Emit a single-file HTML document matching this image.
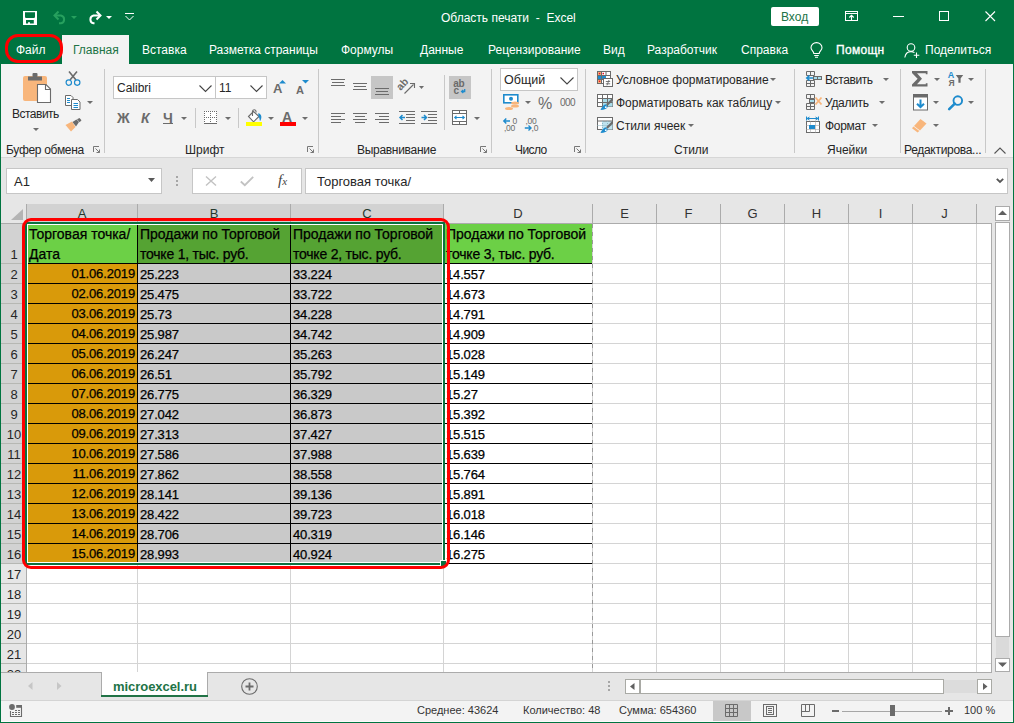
<!DOCTYPE html>
<html><head><meta charset="utf-8">
<style>
*{margin:0;padding:0;box-sizing:border-box}
html,body{width:1014px;height:723px;overflow:hidden;background:#007440;font-family:"Liberation Sans",sans-serif;position:relative}
.a{position:absolute}
svg.a{overflow:visible}
.t{position:absolute;white-space:nowrap;line-height:1}
.tab{position:absolute;top:44px;font-size:12px;color:#fff;white-space:nowrap;line-height:1}
.gl{position:absolute;top:144px;font-size:12px;color:#262626;white-space:nowrap;line-height:1}
.sep{position:absolute;width:1px;background:#c8c8c8}
.rt{position:absolute;font-size:12px;color:#262626;white-space:nowrap;line-height:1}
.c{position:absolute;font-size:14px;color:#000;white-space:nowrap;line-height:20px;-webkit-text-stroke:0.25px #000}
.n{font-size:13px;letter-spacing:-0.15px}
.st{position:absolute;top:705px;font-size:11px;color:#333;white-space:nowrap;line-height:1}
.dd{position:absolute;width:0;height:0;border-left:3px solid transparent;border-right:3px solid transparent;border-top:3px solid #6d6d6d}
</style></head><body>
<!-- ===== TITLE BAR ===== -->
<svg class="a" style="left:23px;top:11px" width="14" height="14"><path fill="#fff" fill-rule="evenodd" d="M0 0H14V14H0Z M2 1.2V6.2L2.8 7H11.2L12 6.2V1.2Z M3 9V12.6H5V11.2H7V12.6H10.8V9Z"/></svg>
<svg class="a" style="left:52px;top:10px" width="16" height="14"><path d="M3 5.5 H9 A4 4 0 0 1 9 13.3 H7" fill="none" stroke="#27a05e" stroke-width="2"/><path d="M6.5 1.5 L2.5 5.5 L6.5 9.5" fill="none" stroke="#27a05e" stroke-width="2"/></svg>
<svg class="a" style="left:71px;top:16px" width="6" height="3"><path d="M0 0H6L3 3Z" fill="#27a05e"/></svg>
<svg class="a" style="left:87px;top:10px" width="16" height="14"><path d="M12.5 5.5 H6.5 A4 4 0 0 0 6.5 13.3 H7.5" fill="none" stroke="#fff" stroke-width="2"/><path d="M9.5 1.5 L13.5 5.5 L9.5 9.5" fill="none" stroke="#fff" stroke-width="2"/></svg>
<svg class="a" style="left:106px;top:16px" width="6" height="3"><path d="M0 0H6L3 3Z" fill="#fff"/></svg>
<svg class="a" style="left:125px;top:13px" width="9" height="8"><path d="M0 0.5H9" stroke="#fff" stroke-width="1"/><path d="M0.5 3 L4.5 7 L8.5 3" fill="none" stroke="#fff" stroke-width="1"/></svg>
<div class="t" style="left:441px;top:12px;font-size:12px;color:#fff">Область печати&nbsp; - &nbsp;Excel</div>
<div class="a" style="left:771px;top:7px;width:48px;height:19px;background:#fff;border-radius:2px"></div>
<div class="t" style="left:781px;top:11px;font-size:12px;color:#217346">Вход</div>
<svg class="a" style="left:845px;top:11px" width="13" height="10"><rect x="0.5" y="0.5" width="12" height="9" fill="none" stroke="#fff"/><path d="M0.5 2.5H12.5" stroke="#fff"/><path d="M6.5 9V4.5 M4.3 6.5 L6.5 4.3 L8.7 6.5" fill="none" stroke="#fff" stroke-width="1.1"/></svg>
<div class="a" style="left:893px;top:16px;width:11px;height:1px;background:#fff"></div>
<div class="a" style="left:939px;top:11px;width:10px;height:10px;border:1px solid #fff"></div>
<svg class="a" style="left:985px;top:11px" width="11" height="11"><path d="M0.5 0.5L10 10M10 0.5L0.5 10" stroke="#fff" stroke-width="1.1"/></svg>

<!-- ===== TABS ===== -->
<div class="a" style="left:62px;top:35px;width:67px;height:30px;background:#f3f3f3"></div>
<div class="tab" style="left:16px">Файл</div>
<div class="tab" style="left:73px;color:#217346">Главная</div>
<div class="tab" style="left:142px">Вставка</div>
<div class="tab" style="left:209px">Разметка страницы</div>
<div class="tab" style="left:341px">Формулы</div>
<div class="tab" style="left:420px">Данные</div>
<div class="tab" style="left:488px">Рецензирование</div>
<div class="tab" style="left:603px">Вид</div>
<div class="tab" style="left:647px">Разработчик</div>
<div class="tab" style="left:741px">Справка</div>
<svg class="a" style="left:810px;top:43px" width="13" height="15"><path d="M3.8 10.5 C3.8 8.5 1 7.2 1 4.8 A5.5 5.2 0 0 1 12 4.8 C12 7.2 9.2 8.5 9.2 10.5 Z" fill="none" stroke="#fff" stroke-width="1.1"/><path d="M4.2 12.5H8.8M5 14.3H8" stroke="#fff" stroke-width="1.1"/></svg>
<div class="tab" style="left:836px;letter-spacing:0.3px;-webkit-text-stroke:0.35px #fff">Помощн</div>
<svg class="a" style="left:904px;top:43px" width="17" height="15"><circle cx="7" cy="4.5" r="3.8" fill="none" stroke="#fff" stroke-width="1.1"/><path d="M0.8 14.5 C1.5 10.5 4 8.6 7 8.6 C8.5 8.6 9.5 9 10.5 9.6" fill="none" stroke="#fff" stroke-width="1.1"/><path d="M12.5 9.5V15M9.8 12.3H15.3" stroke="#fff" stroke-width="1.1"/></svg>
<div class="tab" style="left:925px">Поделиться</div>
<!-- red oval around Файл -->
<div class="a" style="left:5px;top:34px;width:58px;height:29px;border:3px solid #ff0000;border-radius:13px"></div>

<!-- ===== RIBBON ===== -->
<div class="a" style="left:1px;top:64px;width:1012px;height:93px;background:#f3f3f3"></div>
<div class="a" style="left:1px;top:157px;width:1012px;height:1px;background:#d6d6d6"></div>
<div class="sep" style="left:104px;top:69px;height:84px"></div>
<div class="sep" style="left:318px;top:69px;height:84px"></div>
<div class="sep" style="left:491px;top:69px;height:84px"></div>
<div class="sep" style="left:585px;top:69px;height:84px"></div>
<div class="sep" style="left:794px;top:69px;height:84px"></div>
<div class="sep" style="left:900px;top:69px;height:84px"></div>
<div class="sep" style="left:985px;top:69px;height:84px"></div>
<!-- launchers -->
<svg class="a" style="left:93px;top:146px" width="7" height="7"><path d="M0.5 6V0.5H6" fill="none" stroke="#777"/><path d="M2.5 2.5L6.5 6.5M6.5 3.5V6.5H3.5" fill="none" stroke="#777"/></svg>
<svg class="a" style="left:307px;top:146px" width="7" height="7"><path d="M0.5 6V0.5H6" fill="none" stroke="#777"/><path d="M2.5 2.5L6.5 6.5M6.5 3.5V6.5H3.5" fill="none" stroke="#777"/></svg>
<svg class="a" style="left:480px;top:146px" width="7" height="7"><path d="M0.5 6V0.5H6" fill="none" stroke="#777"/><path d="M2.5 2.5L6.5 6.5M6.5 3.5V6.5H3.5" fill="none" stroke="#777"/></svg>
<svg class="a" style="left:574px;top:146px" width="7" height="7"><path d="M0.5 6V0.5H6" fill="none" stroke="#777"/><path d="M2.5 2.5L6.5 6.5M6.5 3.5V6.5H3.5" fill="none" stroke="#777"/></svg>
<svg class="a" style="left:994px;top:147px" width="12" height="7"><path d="M0.5 6.5L6 1L11.5 6.5" fill="none" stroke="#555" stroke-width="1.1"/></svg>
<!-- group labels -->
<div class="gl" style="left:6px;letter-spacing:-0.3px">Буфер обмена</div>
<div class="gl" style="left:185px">Шрифт</div>
<div class="gl" style="left:357px;letter-spacing:-0.3px">Выравнивание</div>
<div class="gl" style="left:515px;letter-spacing:-0.6px">Число</div>
<div class="gl" style="left:674px">Стили</div>
<div class="gl" style="left:827px">Ячейки</div>
<div class="gl" style="left:904px;letter-spacing:-0.3px">Редактирова...</div>

<!-- Clipboard -->
<svg class="a" style="left:22px;top:72px" width="30" height="32">
 <rect x="1" y="4" width="24" height="25" rx="2" fill="#f8b67c"/>
 <path d="M6 4.5H20V8.5H6Z" fill="#6b6b6b"/><rect x="10.5" y="1" width="5" height="4" rx="1" fill="#6b6b6b"/>
 <path d="M15.5 12.5H24L28.5 17V30.5H15.5Z" fill="#fff" stroke="#6b6b6b" stroke-width="1.1"/><path d="M23.5 12.5V17.5H28.5" fill="none" stroke="#6b6b6b" stroke-width="1.1"/>
</svg>
<div class="rt" style="left:12px;top:108px;letter-spacing:-0.5px">Вставить</div>
<div class="dd" style="left:33px;top:128px"></div>
<svg class="a" style="left:65px;top:71px" width="16" height="15"><path d="M4 0.5L11 9M12 0.5L5 9" stroke="#6b6b6b" stroke-width="1.6"/><circle cx="3.8" cy="11.6" r="2.7" fill="none" stroke="#1e8bcd" stroke-width="1.2"/><circle cx="12.2" cy="11.6" r="2.7" fill="none" stroke="#1e8bcd" stroke-width="1.2"/></svg>
<svg class="a" style="left:65px;top:95px" width="16" height="15"><path d="M0.5 0.5H6L8 2.5V10.5H0.5Z" fill="#fff" stroke="#6b6b6b"/><path d="M6.5 4.5H12.5L15 7V14.5H6.5Z" fill="#fff" stroke="#6b6b6b"/><path d="M2 3.5H5M2 5.5H5M2 7.5H5M8.5 8.5H13M8.5 10.5H13M8.5 12.5H13" stroke="#1e8bcd"/></svg>
<div class="dd" style="left:87px;top:101px"></div>
<svg class="a" style="left:65px;top:118px" width="17" height="14"><path d="M0.5 7 L7 3.5 L10.5 9 L6 13.5Z" fill="#f8b67c"/><path d="M7.5 4 L11.5 1.5 L14 4 L11 8.5Z" fill="#6b6b6b"/><path d="M12 1.2 L14.5 0 L16.5 2.2 L14.6 4.2Z" fill="#6b6b6b"/></svg>

<!-- Font -->
<div class="a" style="left:113px;top:76px;width:103px;height:23px;background:#fff;border:1px solid #c6c6c6"></div>
<div class="rt" style="left:117px;top:82px;color:#262626">Calibri</div>
<svg class="a" style="left:199px;top:85px" width="13" height="7"><path d="M0.5 0.5L6.5 6.5L12.5 0.5" fill="none" stroke="#444" stroke-width="1.1"/></svg>
<div class="a" style="left:215px;top:76px;width:52px;height:23px;background:#fff;border:1px solid #c6c6c6"></div>
<div class="rt" style="left:219px;top:82px;color:#262626">11</div>
<svg class="a" style="left:250px;top:85px" width="13" height="7"><path d="M0.5 0.5L6.5 6.5L12.5 0.5" fill="none" stroke="#444" stroke-width="1.1"/></svg>
<div class="t" style="left:273px;top:82px;font-size:13px;font-weight:bold;color:#6b6b6b">A</div>
<svg class="a" style="left:279px;top:80px" width="7" height="4"><path d="M0 3.5H7L3.5 0Z" fill="#1e8bcd"/></svg>
<div class="t" style="left:296px;top:85px;font-size:11px;font-weight:bold;color:#6b6b6b">A</div>
<svg class="a" style="left:302px;top:80px" width="7" height="4"><path d="M0 0H7L3.5 3.5Z" fill="#1e8bcd"/></svg>
<div class="t" style="left:117px;top:111px;font-size:14px;font-weight:bold;color:#6b6b6b">Ж</div>
<div class="t" style="left:141px;top:111px;font-size:14px;font-weight:bold;font-style:italic;color:#6b6b6b">К</div>
<div class="t" style="left:163px;top:111px;font-size:14px;font-weight:bold;color:#6b6b6b">Ч</div>
<div class="a" style="left:163px;top:123px;width:10px;height:1px;background:#6b6b6b"></div>
<div class="dd" style="left:181px;top:117px"></div>
<div class="sep" style="left:195px;top:108px;height:20px"></div>
<svg class="a" style="left:204px;top:110px" width="14" height="14"><rect x="0" y="1" width="13" height="12" fill="#fff"/><rect x="0" y="1" width="1" height="1" fill="#6b6b6b"/><rect x="2" y="1" width="1" height="1" fill="#6b6b6b"/><rect x="4" y="1" width="1" height="1" fill="#6b6b6b"/><rect x="6" y="1" width="1" height="1" fill="#6b6b6b"/><rect x="8" y="1" width="1" height="1" fill="#6b6b6b"/><rect x="10" y="1" width="1" height="1" fill="#6b6b6b"/><rect x="12" y="1" width="1" height="1" fill="#6b6b6b"/><rect x="0" y="7" width="1" height="1" fill="#6b6b6b"/><rect x="2" y="7" width="1" height="1" fill="#6b6b6b"/><rect x="4" y="7" width="1" height="1" fill="#6b6b6b"/><rect x="6" y="7" width="1" height="1" fill="#6b6b6b"/><rect x="8" y="7" width="1" height="1" fill="#6b6b6b"/><rect x="10" y="7" width="1" height="1" fill="#6b6b6b"/><rect x="12" y="7" width="1" height="1" fill="#6b6b6b"/><rect x="0" y="3" width="1" height="1" fill="#6b6b6b"/><rect x="6" y="3" width="1" height="1" fill="#6b6b6b"/><rect x="12" y="3" width="1" height="1" fill="#6b6b6b"/><rect x="0" y="5" width="1" height="1" fill="#6b6b6b"/><rect x="6" y="5" width="1" height="1" fill="#6b6b6b"/><rect x="12" y="5" width="1" height="1" fill="#6b6b6b"/><rect x="0" y="9" width="1" height="1" fill="#6b6b6b"/><rect x="6" y="9" width="1" height="1" fill="#6b6b6b"/><rect x="12" y="9" width="1" height="1" fill="#6b6b6b"/><rect x="0" y="11" width="1" height="1" fill="#6b6b6b"/><rect x="6" y="11" width="1" height="1" fill="#6b6b6b"/><rect x="12" y="11" width="1" height="1" fill="#6b6b6b"/><rect x="0" y="13" width="13" height="1" fill="#6b6b6b"/></svg>
<div class="dd" style="left:225px;top:117px"></div>
<div class="sep" style="left:238px;top:108px;height:20px"></div>
<svg class="a" style="left:247px;top:109px" width="17" height="14"><path d="M1.5 7.5 L6.5 2.5 L12 7.5 L6.5 12.8Z" fill="#fff" stroke="#6b6b6b" stroke-width="1.1"/><path d="M5.5 7V2.2 A1.8 1.8 0 0 1 9 2.2 V3.5" fill="none" stroke="#6b6b6b" stroke-width="1.1"/><path d="M11.2 4.2 C14.5 4.8 15.5 8.5 13 12.3 C12.5 10 12.3 8.5 11.5 7.3Z" fill="#1e8bcd"/></svg>
<div class="a" style="left:246px;top:122px;width:16px;height:4px;background:#ffff00"></div>
<div class="dd" style="left:268px;top:117px"></div>
<div class="t" style="left:282px;top:110px;font-size:14px;font-weight:bold;color:#6b6b6b">A</div>
<div class="a" style="left:280px;top:122px;width:16px;height:4px;background:#ff0000"></div>
<div class="dd" style="left:302px;top:117px"></div>

<!-- Alignment -->
<svg class="a" style="left:331px;top:79px" width="15" height="8"><path d="M0 0.5H14M1 3.5H13M0 6.5H14" stroke="#6b6b6b"/></svg>
<svg class="a" style="left:353px;top:83px" width="15" height="8"><path d="M0 0.5H14M1 3.5H13M0 6.5H14" stroke="#6b6b6b"/></svg>
<div class="a" style="left:371px;top:76px;width:22px;height:23px;background:#c6c6c6"></div>
<svg class="a" style="left:375px;top:88px" width="15" height="8"><path d="M0 0.5H14M1 3.5H13M0 6.5H14" stroke="#6b6b6b"/></svg>
<svg class="a" style="left:399px;top:79px" width="26" height="16"><text x="0" y="0" font-size="10.5" font-weight="bold" fill="#6b6b6b" font-family="Liberation Sans" transform="translate(1.8 12) rotate(-48)">ab</text><path d="M5.5 14.5 L14.5 5.5" stroke="#6b6b6b" stroke-width="1.1"/><path d="M11 4.5H15.5V9" fill="none" stroke="#6b6b6b" stroke-width="1.1"/><path d="M20 7H25L22.5 10Z" fill="#6d6d6d"/></svg>
<div class="sep" style="left:444px;top:75px;height:55px"></div>
<div class="a" style="left:449px;top:76px;width:22px;height:23px;background:#c6c6c6"></div>
<svg class="a" style="left:452px;top:78px" width="17" height="18"><text x="1.3" y="8.6" font-size="10" font-weight="bold" fill="#6b6b6b" font-family="Liberation Sans" letter-spacing="-0.4">ab</text><text x="1.5" y="15.8" font-size="10" font-weight="bold" fill="#6b6b6b" font-family="Liberation Sans">c</text><path d="M12.7 11V13.5H10 M11.3 12L9.6 13.5L11.3 15" fill="none" stroke="#1e8bcd" stroke-width="1.3"/></svg>
<svg class="a" style="left:331px;top:113px" width="15" height="11"><path d="M0 0.5H14M0 3.5H10M0 6.5H14M0 9.5H10" stroke="#6b6b6b"/></svg>
<svg class="a" style="left:353px;top:113px" width="15" height="11"><path d="M0 0.5H14M2 3.5H12M0 6.5H14M2 9.5H12" stroke="#6b6b6b"/></svg>
<svg class="a" style="left:375px;top:113px" width="15" height="11"><path d="M0 0.5H14M4 3.5H14M0 6.5H14M4 9.5H14" stroke="#6b6b6b"/></svg>
<svg class="a" style="left:399px;top:111px" width="17" height="13"><path d="M0 0.5H16M7 3.5H16M7 6.5H16M7 9.5H16M0 12.5H16" stroke="#6b6b6b"/><path d="M1 6.5H6M3.5 4L1 6.5L3.5 9" fill="none" stroke="#1e8bcd" stroke-width="1.5"/></svg>
<svg class="a" style="left:421px;top:111px" width="17" height="13"><path d="M0 0.5H16M7 3.5H16M7 6.5H16M7 9.5H16M0 12.5H16" stroke="#6b6b6b"/><path d="M0.5 6.5H5.5M3 4L5.5 6.5L3 9" fill="none" stroke="#1e8bcd" stroke-width="1.5"/></svg>
<svg class="a" style="left:452px;top:110px" width="16" height="15"><rect x="0.5" y="0.5" width="14" height="14" fill="#fff" stroke="#6b6b6b"/><path d="M0.5 3.5H14.5M0.5 11.5H14.5M7.5 0.5V3.5M7.5 11.5V14.5" stroke="#6b6b6b"/><path d="M2.5 7.5H12.5M4.5 5.8L2.7 7.5L4.5 9.2M10.5 5.8L12.3 7.5L10.5 9.2" fill="none" stroke="#1e8bcd" stroke-width="1.1"/></svg>
<div class="dd" style="left:474px;top:117px"></div>

<!-- Number -->
<div class="a" style="left:500px;top:68px;width:78px;height:23px;background:#fff;border:1px solid #c6c6c6"></div>
<div class="rt" style="left:504px;top:74px;font-size:12.5px">Общий</div>
<svg class="a" style="left:560px;top:77px" width="14" height="8"><path d="M0.5 0.5L7 7L13.5 0.5" fill="none" stroke="#444" stroke-width="1.1"/></svg>
<svg class="a" style="left:503px;top:94px" width="17" height="17"><rect x="0.8" y="0.8" width="14" height="8" fill="#fff" stroke="#1e8bcd" stroke-width="1.6"/><circle cx="8" cy="4.8" r="2" fill="#1e8bcd"/><ellipse cx="12" cy="9" rx="4" ry="1.6" fill="#f8b67c"/><ellipse cx="12" cy="12" rx="4" ry="1.6" fill="#f8b67c"/><ellipse cx="6" cy="14.5" rx="4" ry="1.6" fill="#f8b67c"/></svg>
<div class="dd" style="left:525px;top:101px"></div>
<div class="t" style="left:538px;top:96px;font-size:16px;color:#6b6b6b">%</div>
<div class="t" style="left:560px;top:98px;font-size:10px;color:#6b6b6b;letter-spacing:-0.6px">000</div>
<svg class="a" style="left:503px;top:117px" width="16" height="17"><path d="M0.8 4H7M3.3 1.5L0.8 4L3.3 6.5" fill="none" stroke="#1e8bcd" stroke-width="1.4"/><text x="9.5" y="6.8" font-size="8.5" fill="#6b6b6b" font-family="Liberation Sans">0</text><text x="1" y="14" font-size="8.5" fill="#6b6b6b" font-family="Liberation Sans" letter-spacing="-0.3">,00</text></svg>
<svg class="a" style="left:524px;top:117px" width="16" height="17"><text x="1.5" y="6.8" font-size="8.5" fill="#6b6b6b" font-family="Liberation Sans" letter-spacing="-0.3">,00</text><path d="M0.8 11H7M4.5 8.5L7 11L4.5 13.5" fill="none" stroke="#1e8bcd" stroke-width="1.4"/><text x="7.5" y="14" font-size="8.5" fill="#6b6b6b" font-family="Liberation Sans">,0</text></svg>

<!-- Styles -->
<svg class="a" style="left:597px;top:71px" width="17" height="17"><rect x="0.5" y="0.5" width="13" height="12" fill="#fff" stroke="#6b6b6b"/><rect x="1" y="1" width="3.5" height="3.5" fill="#f8b67c"/><rect x="1" y="8.5" width="3.5" height="3.5" fill="#f8b67c"/><rect x="1" y="4.5" width="8" height="4" fill="#1e8bcd"/><rect x="1.8" y="1.8" width="1.5" height="1.5" fill="#e81123"/><rect x="5.5" y="1.8" width="1.5" height="1.5" fill="#e81123"/><rect x="1.8" y="9.5" width="1.5" height="1.5" fill="#e81123"/><path d="M4.5 0.5V12.5M9 0.5V4.5M0.5 4.5H13.5M0.5 8.5H6" stroke="#6b6b6b"/><rect x="6.5" y="7.5" width="9" height="8" fill="#fff" stroke="#6b6b6b"/><path d="M8.8 10.5H13.2M8.8 12.8H13.2M12 9L10 14.3" stroke="#6b6b6b" stroke-width="0.9"/></svg>
<div class="rt" style="left:616px;top:74px">Условное форматирование</div>
<div class="dd" style="left:770px;top:78px"></div>
<svg class="a" style="left:597px;top:94px" width="17" height="17"><rect x="0.5" y="0.5" width="15" height="12" fill="#fff" stroke="#6b6b6b"/><rect x="5.5" y="4.5" width="10" height="8" fill="#a9dcea"/><path d="M5.5 0.5V12.5M10.5 0.5V12.5M0.5 4.5H15.5M0.5 8.5H15.5" stroke="#6b6b6b"/><path d="M16 3.2 L9 10.2 L10.6 11.8 L16 6.4Z" fill="#6b6b6b"/><path d="M3.5 16 C4.5 13.5 6.5 11 8.5 10.3 L10.8 12.6 C10.3 14.8 7.5 16 3.5 16Z" fill="#1e8bcd"/><circle cx="8.8" cy="13.2" r="0.9" fill="#fff"/></svg>
<div class="rt" style="left:616px;top:97px">Форматировать как таблицу</div>
<div class="dd" style="left:775px;top:101px"></div>
<svg class="a" style="left:597px;top:117px" width="17" height="17"><rect x="0.5" y="0.5" width="15" height="12" fill="#fff" stroke="#6b6b6b"/><rect x="5" y="4" width="10.5" height="8.5" fill="#bfe3ef"/><path d="M0.5 4H15.5" stroke="#6b6b6b"/><path d="M5.5 4V12.5M10.5 4V12.5M0.5 8.5H15.5" stroke="#8fb8c4" stroke-dasharray="1 1"/><path d="M16 3.2 L9 10.2 L10.6 11.8 L16 6.4Z" fill="#6b6b6b"/><path d="M3.5 16 C4.5 13.5 6.5 11 8.5 10.3 L10.8 12.6 C10.3 14.8 7.5 16 3.5 16Z" fill="#1e8bcd"/><circle cx="8.8" cy="13.2" r="0.9" fill="#fff"/></svg>
<div class="rt" style="left:616px;top:120px">Стили ячеек</div>
<div class="dd" style="left:688px;top:124px"></div>

<!-- Cells -->
<svg class="a" style="left:805px;top:70px" width="18" height="18"><path d="M1.5 1.5H9.5V5.5H1.5Z M5.5 1.5V5.5 M1.5 10.5H9.5V16.5H1.5Z M1.5 13.5H9.5 M5.5 10.5V16.5" fill="none" stroke="#6b6b6b"/><rect x="8.5" y="6.5" width="8" height="3" fill="#a9dcea" stroke="#6b6b6b"/><path d="M12.5 6.5V9.5" stroke="#6b6b6b"/><path d="M1.8 8H8 M4.5 5.5L1.8 8L4.5 10.5" fill="none" stroke="#1e8bcd" stroke-width="1.6"/></svg>
<div class="rt" style="left:825px;top:74px;letter-spacing:-0.4px">Вставить</div>
<div class="dd" style="left:883px;top:78px"></div>
<svg class="a" style="left:805px;top:93px" width="18" height="18"><path d="M1.5 1.5H9.5V5.5H1.5Z M5.5 1.5V5.5 M1.5 10.5H9.5V16.5H1.5Z M1.5 13.5H9.5 M5.5 10.5V16.5" fill="none" stroke="#6b6b6b"/><rect x="4.5" y="6.5" width="5" height="3" fill="#a9dcea" stroke="#6b6b6b"/><path d="M10.5 4.5L16.5 11.5M16.5 4.5L10.5 11.5" stroke="#f8b67c" stroke-width="1.8"/></svg>
<div class="rt" style="left:825px;top:97px;letter-spacing:-0.3px">Удалить</div>
<div class="dd" style="left:879px;top:101px"></div>
<svg class="a" style="left:805px;top:116px" width="17" height="18"><path d="M1.5 2.5H13.5M1.5 0.5V4.5M13.5 0.5V4.5" fill="none" stroke="#1e8bcd"/><path d="M4.5 1L2 2.5L4.5 4M10.5 1L13 2.5L10.5 4" fill="none" stroke="#1e8bcd"/><rect x="1.5" y="5.5" width="13" height="11" fill="#fff" stroke="#6b6b6b"/><path d="M5.5 5.5V16.5M10.5 5.5V16.5M1.5 9.5H14.5M1.5 13.5H14.5" stroke="#9a9a9a" stroke-dasharray="1 1"/><rect x="4" y="9" width="6" height="4" fill="#1e8bcd"/></svg>
<div class="rt" style="left:825px;top:120px;letter-spacing:-0.3px">Формат</div>
<div class="dd" style="left:872px;top:124px"></div>

<!-- Editing -->
<svg class="a" style="left:912px;top:71px" width="16" height="16"><path d="M0 0H15.5V3.2H13.8V2.2H5L10 7.8L5 13.3H13.8V12.3H15.5V15.5H0V13.6L5.6 7.8L0 2Z" fill="#6b6b6b"/></svg>
<div class="dd" style="left:934px;top:78px"></div>
<svg class="a" style="left:947px;top:70px" width="18" height="17"><text x="0.8" y="7.5" font-size="9" font-weight="bold" fill="#1e8bcd" font-family="Liberation Sans">A</text><text x="1.5" y="16" font-size="8.5" font-weight="bold" fill="#6b6b6b" font-family="Liberation Sans">Я</text><path d="M8.8 5H16.2L13.6 8.6V12.8H11.4V8.6Z" fill="#6b6b6b"/></svg>
<div class="dd" style="left:968px;top:78px"></div>
<svg class="a" style="left:913px;top:94px" width="15" height="17"><rect x="0.5" y="0.5" width="14" height="15.5" fill="#fff" stroke="#6b6b6b"/><rect x="0.5" y="0.5" width="14" height="3" fill="#6b6b6b"/><path d="M7.5 5.5V13.2M4 9.8L7.5 13.2L11 9.8" fill="none" stroke="#1e8bcd" stroke-width="2"/></svg>
<div class="dd" style="left:933px;top:101px"></div>
<svg class="a" style="left:948px;top:95px" width="16" height="16"><circle cx="9.8" cy="5.6" r="4.3" fill="none" stroke="#1e8bcd" stroke-width="1.9"/><path d="M6.8 8.6L1.2 14.2" stroke="#1e8bcd" stroke-width="2.6" stroke-linecap="round"/></svg>
<div class="dd" style="left:968px;top:101px"></div>
<svg class="a" style="left:912px;top:118px" width="16" height="15"><path d="M8.5 1L14.5 5.5L8 12.5L2 8Z" fill="#f8b67c"/><path d="M1.5 8.6L7.4 13L5.6 14.6L0 10.3Z" fill="#f8b67c"/></svg>
<div class="dd" style="left:933px;top:124px"></div>

<!-- ===== FORMULA BAR ===== -->
<div class="a" style="left:1px;top:158px;width:1012px;height:46px;background:#e6e6e6"></div>
<div class="a" style="left:6px;top:168px;width:156px;height:26px;background:#fff;border:1px solid #c6c6c6"></div>
<div class="t" style="left:14px;top:175px;font-size:13px;color:#262626">A1</div>
<svg class="a" style="left:148px;top:178px" width="7" height="4"><path d="M0 0H7L3.5 4Z" fill="#595959"/></svg>
<div class="a" style="left:176px;top:176px;width:2px;height:2px;background:#a6a6a6"></div>
<div class="a" style="left:176px;top:180px;width:2px;height:2px;background:#a6a6a6"></div>
<div class="a" style="left:176px;top:184px;width:2px;height:2px;background:#a6a6a6"></div>
<div class="a" style="left:192px;top:168px;width:110px;height:26px;background:#fff;border:1px solid #c6c6c6"></div>
<svg class="a" style="left:205px;top:176px" width="12" height="10"><path d="M1 0.5L11 9.5M11 0.5L1 9.5" stroke="#c2c2c2" stroke-width="1.4"/></svg>
<svg class="a" style="left:240px;top:176px" width="14" height="10"><path d="M0.8 5.5L4.8 9.2L13.2 0.8" fill="none" stroke="#c2c2c2" stroke-width="1.8"/></svg>
<div class="t" style="left:278px;top:173px;font-size:15px;font-style:italic;font-family:'Liberation Serif',serif;color:#444">f<span style="font-size:11px">x</span></div>
<div class="a" style="left:305px;top:168px;width:703px;height:26px;background:#fff;border:1px solid #c6c6c6"></div>
<div class="t" style="left:317px;top:175px;font-size:13px;color:#262626">Торговая точка/</div>
<svg class="a" style="left:996px;top:178px" width="8" height="5"><path d="M0.8 0.8L4 4L7.2 0.8" fill="none" stroke="#555" stroke-width="1.8"/></svg>

<div class="a" style="left:1px;top:224px;width:990px;height:448px;background:#fff"></div>
<div class="a" style="left:27px;top:263px;width:964px;height:1px;background:#d4d4d4"></div>
<div class="a" style="left:27px;top:283px;width:964px;height:1px;background:#d4d4d4"></div>
<div class="a" style="left:27px;top:303px;width:964px;height:1px;background:#d4d4d4"></div>
<div class="a" style="left:27px;top:323px;width:964px;height:1px;background:#d4d4d4"></div>
<div class="a" style="left:27px;top:343px;width:964px;height:1px;background:#d4d4d4"></div>
<div class="a" style="left:27px;top:363px;width:964px;height:1px;background:#d4d4d4"></div>
<div class="a" style="left:27px;top:383px;width:964px;height:1px;background:#d4d4d4"></div>
<div class="a" style="left:27px;top:403px;width:964px;height:1px;background:#d4d4d4"></div>
<div class="a" style="left:27px;top:423px;width:964px;height:1px;background:#d4d4d4"></div>
<div class="a" style="left:27px;top:443px;width:964px;height:1px;background:#d4d4d4"></div>
<div class="a" style="left:27px;top:463px;width:964px;height:1px;background:#d4d4d4"></div>
<div class="a" style="left:27px;top:483px;width:964px;height:1px;background:#d4d4d4"></div>
<div class="a" style="left:27px;top:503px;width:964px;height:1px;background:#d4d4d4"></div>
<div class="a" style="left:27px;top:523px;width:964px;height:1px;background:#d4d4d4"></div>
<div class="a" style="left:27px;top:543px;width:964px;height:1px;background:#d4d4d4"></div>
<div class="a" style="left:27px;top:563px;width:964px;height:1px;background:#d4d4d4"></div>
<div class="a" style="left:27px;top:583px;width:964px;height:1px;background:#d4d4d4"></div>
<div class="a" style="left:27px;top:603px;width:964px;height:1px;background:#d4d4d4"></div>
<div class="a" style="left:27px;top:623px;width:964px;height:1px;background:#d4d4d4"></div>
<div class="a" style="left:27px;top:643px;width:964px;height:1px;background:#d4d4d4"></div>
<div class="a" style="left:27px;top:663px;width:964px;height:1px;background:#d4d4d4"></div>
<div class="a" style="left:137px;top:224px;width:1px;height:448px;background:#d4d4d4"></div>
<div class="a" style="left:290px;top:224px;width:1px;height:448px;background:#d4d4d4"></div>
<div class="a" style="left:443px;top:224px;width:1px;height:448px;background:#d4d4d4"></div>
<div class="a" style="left:592px;top:224px;width:1px;height:448px;background:#d4d4d4"></div>
<div class="a" style="left:656px;top:224px;width:1px;height:448px;background:#d4d4d4"></div>
<div class="a" style="left:720px;top:224px;width:1px;height:448px;background:#d4d4d4"></div>
<div class="a" style="left:784px;top:224px;width:1px;height:448px;background:#d4d4d4"></div>
<div class="a" style="left:848px;top:224px;width:1px;height:448px;background:#d4d4d4"></div>
<div class="a" style="left:912px;top:224px;width:1px;height:448px;background:#d4d4d4"></div>
<div class="a" style="left:976px;top:224px;width:1px;height:448px;background:#d4d4d4"></div>
<div class="a" style="left:27px;top:224px;width:110px;height:39px;background:#6cd046"></div>
<div class="a" style="left:138px;top:224px;width:152px;height:39px;background:#55a333"></div>
<div class="a" style="left:291px;top:224px;width:152px;height:39px;background:#55a333"></div>
<div class="a" style="left:444px;top:224px;width:148px;height:39px;background:#6cd046"></div>
<div class="a" style="left:27px;top:264px;width:110px;height:19px;background:#d99a0a"></div>
<div class="a" style="left:138px;top:264px;width:152px;height:19px;background:#c9c9c9"></div>
<div class="a" style="left:291px;top:264px;width:152px;height:19px;background:#c9c9c9"></div>
<div class="a" style="left:27px;top:284px;width:110px;height:19px;background:#d99a0a"></div>
<div class="a" style="left:138px;top:284px;width:152px;height:19px;background:#c9c9c9"></div>
<div class="a" style="left:291px;top:284px;width:152px;height:19px;background:#c9c9c9"></div>
<div class="a" style="left:27px;top:304px;width:110px;height:19px;background:#d99a0a"></div>
<div class="a" style="left:138px;top:304px;width:152px;height:19px;background:#c9c9c9"></div>
<div class="a" style="left:291px;top:304px;width:152px;height:19px;background:#c9c9c9"></div>
<div class="a" style="left:27px;top:324px;width:110px;height:19px;background:#d99a0a"></div>
<div class="a" style="left:138px;top:324px;width:152px;height:19px;background:#c9c9c9"></div>
<div class="a" style="left:291px;top:324px;width:152px;height:19px;background:#c9c9c9"></div>
<div class="a" style="left:27px;top:344px;width:110px;height:19px;background:#d99a0a"></div>
<div class="a" style="left:138px;top:344px;width:152px;height:19px;background:#c9c9c9"></div>
<div class="a" style="left:291px;top:344px;width:152px;height:19px;background:#c9c9c9"></div>
<div class="a" style="left:27px;top:364px;width:110px;height:19px;background:#d99a0a"></div>
<div class="a" style="left:138px;top:364px;width:152px;height:19px;background:#c9c9c9"></div>
<div class="a" style="left:291px;top:364px;width:152px;height:19px;background:#c9c9c9"></div>
<div class="a" style="left:27px;top:384px;width:110px;height:19px;background:#d99a0a"></div>
<div class="a" style="left:138px;top:384px;width:152px;height:19px;background:#c9c9c9"></div>
<div class="a" style="left:291px;top:384px;width:152px;height:19px;background:#c9c9c9"></div>
<div class="a" style="left:27px;top:404px;width:110px;height:19px;background:#d99a0a"></div>
<div class="a" style="left:138px;top:404px;width:152px;height:19px;background:#c9c9c9"></div>
<div class="a" style="left:291px;top:404px;width:152px;height:19px;background:#c9c9c9"></div>
<div class="a" style="left:27px;top:424px;width:110px;height:19px;background:#d99a0a"></div>
<div class="a" style="left:138px;top:424px;width:152px;height:19px;background:#c9c9c9"></div>
<div class="a" style="left:291px;top:424px;width:152px;height:19px;background:#c9c9c9"></div>
<div class="a" style="left:27px;top:444px;width:110px;height:19px;background:#d99a0a"></div>
<div class="a" style="left:138px;top:444px;width:152px;height:19px;background:#c9c9c9"></div>
<div class="a" style="left:291px;top:444px;width:152px;height:19px;background:#c9c9c9"></div>
<div class="a" style="left:27px;top:464px;width:110px;height:19px;background:#d99a0a"></div>
<div class="a" style="left:138px;top:464px;width:152px;height:19px;background:#c9c9c9"></div>
<div class="a" style="left:291px;top:464px;width:152px;height:19px;background:#c9c9c9"></div>
<div class="a" style="left:27px;top:484px;width:110px;height:19px;background:#d99a0a"></div>
<div class="a" style="left:138px;top:484px;width:152px;height:19px;background:#c9c9c9"></div>
<div class="a" style="left:291px;top:484px;width:152px;height:19px;background:#c9c9c9"></div>
<div class="a" style="left:27px;top:504px;width:110px;height:19px;background:#d99a0a"></div>
<div class="a" style="left:138px;top:504px;width:152px;height:19px;background:#c9c9c9"></div>
<div class="a" style="left:291px;top:504px;width:152px;height:19px;background:#c9c9c9"></div>
<div class="a" style="left:27px;top:524px;width:110px;height:19px;background:#d99a0a"></div>
<div class="a" style="left:138px;top:524px;width:152px;height:19px;background:#c9c9c9"></div>
<div class="a" style="left:291px;top:524px;width:152px;height:19px;background:#c9c9c9"></div>
<div class="a" style="left:27px;top:544px;width:110px;height:19px;background:#d99a0a"></div>
<div class="a" style="left:138px;top:544px;width:152px;height:19px;background:#c9c9c9"></div>
<div class="a" style="left:291px;top:544px;width:152px;height:19px;background:#c9c9c9"></div>
<div class="a" style="left:27px;top:263px;width:416px;height:1px;background:#000"></div>
<div class="a" style="left:443px;top:263px;width:149px;height:1px;background:#000"></div>
<div class="a" style="left:27px;top:283px;width:416px;height:1px;background:#000"></div>
<div class="a" style="left:443px;top:283px;width:149px;height:1px;background:#000"></div>
<div class="a" style="left:27px;top:303px;width:416px;height:1px;background:#000"></div>
<div class="a" style="left:443px;top:303px;width:149px;height:1px;background:#000"></div>
<div class="a" style="left:27px;top:323px;width:416px;height:1px;background:#000"></div>
<div class="a" style="left:443px;top:323px;width:149px;height:1px;background:#000"></div>
<div class="a" style="left:27px;top:343px;width:416px;height:1px;background:#000"></div>
<div class="a" style="left:443px;top:343px;width:149px;height:1px;background:#000"></div>
<div class="a" style="left:27px;top:363px;width:416px;height:1px;background:#000"></div>
<div class="a" style="left:443px;top:363px;width:149px;height:1px;background:#000"></div>
<div class="a" style="left:27px;top:383px;width:416px;height:1px;background:#000"></div>
<div class="a" style="left:443px;top:383px;width:149px;height:1px;background:#000"></div>
<div class="a" style="left:27px;top:403px;width:416px;height:1px;background:#000"></div>
<div class="a" style="left:443px;top:403px;width:149px;height:1px;background:#000"></div>
<div class="a" style="left:27px;top:423px;width:416px;height:1px;background:#000"></div>
<div class="a" style="left:443px;top:423px;width:149px;height:1px;background:#000"></div>
<div class="a" style="left:27px;top:443px;width:416px;height:1px;background:#000"></div>
<div class="a" style="left:443px;top:443px;width:149px;height:1px;background:#000"></div>
<div class="a" style="left:27px;top:463px;width:416px;height:1px;background:#000"></div>
<div class="a" style="left:443px;top:463px;width:149px;height:1px;background:#000"></div>
<div class="a" style="left:27px;top:483px;width:416px;height:1px;background:#000"></div>
<div class="a" style="left:443px;top:483px;width:149px;height:1px;background:#000"></div>
<div class="a" style="left:27px;top:503px;width:416px;height:1px;background:#000"></div>
<div class="a" style="left:443px;top:503px;width:149px;height:1px;background:#000"></div>
<div class="a" style="left:27px;top:523px;width:416px;height:1px;background:#000"></div>
<div class="a" style="left:443px;top:523px;width:149px;height:1px;background:#000"></div>
<div class="a" style="left:27px;top:543px;width:416px;height:1px;background:#000"></div>
<div class="a" style="left:443px;top:543px;width:149px;height:1px;background:#000"></div>
<div class="a" style="left:27px;top:563px;width:416px;height:1px;background:#000"></div>
<div class="a" style="left:443px;top:563px;width:149px;height:1px;background:#000"></div>
<div class="a" style="left:137px;top:224px;width:1px;height:340px;background:#000"></div>
<div class="a" style="left:290px;top:224px;width:1px;height:340px;background:#000"></div>
<div class="a" style="left:592px;top:224px;width:1px;height:448px;background:repeating-linear-gradient(#999 0 4px,transparent 4px 8px)"></div>
<div class="a" style="left:991px;top:223px;width:1px;height:449px;background:#ababab"></div>
<div class="a" style="left:26px;top:223px;width:1px;height:449px;background:#ababab"></div>
<div class="a" style="left:1px;top:204px;width:991px;height:19px;background:#e6e6e6"></div>
<div class="a" style="left:27px;top:204px;width:110px;height:19px;background:#d2d2d2"></div>
<div class="a" style="left:137px;top:204px;width:1px;height:19px;background:#ababab"></div>
<div class="t" style="left:27px;top:207px;width:110px;text-align:center;font-size:13px;color:#25392d">A</div>
<div class="a" style="left:138px;top:204px;width:152px;height:19px;background:#d2d2d2"></div>
<div class="a" style="left:290px;top:204px;width:1px;height:19px;background:#ababab"></div>
<div class="t" style="left:138px;top:207px;width:152px;text-align:center;font-size:13px;color:#25392d">B</div>
<div class="a" style="left:291px;top:204px;width:152px;height:19px;background:#d2d2d2"></div>
<div class="a" style="left:443px;top:204px;width:1px;height:19px;background:#ababab"></div>
<div class="t" style="left:291px;top:207px;width:152px;text-align:center;font-size:13px;color:#25392d">C</div>
<div class="a" style="left:444px;top:204px;width:148px;height:19px;background:#e6e6e6"></div>
<div class="a" style="left:592px;top:204px;width:1px;height:19px;background:#ababab"></div>
<div class="t" style="left:444px;top:207px;width:148px;text-align:center;font-size:13px;color:#333">D</div>
<div class="a" style="left:593px;top:204px;width:63px;height:19px;background:#e6e6e6"></div>
<div class="a" style="left:656px;top:204px;width:1px;height:19px;background:#ababab"></div>
<div class="t" style="left:593px;top:207px;width:63px;text-align:center;font-size:13px;color:#333">E</div>
<div class="a" style="left:657px;top:204px;width:63px;height:19px;background:#e6e6e6"></div>
<div class="a" style="left:720px;top:204px;width:1px;height:19px;background:#ababab"></div>
<div class="t" style="left:657px;top:207px;width:63px;text-align:center;font-size:13px;color:#333">F</div>
<div class="a" style="left:721px;top:204px;width:63px;height:19px;background:#e6e6e6"></div>
<div class="a" style="left:784px;top:204px;width:1px;height:19px;background:#ababab"></div>
<div class="t" style="left:721px;top:207px;width:63px;text-align:center;font-size:13px;color:#333">G</div>
<div class="a" style="left:785px;top:204px;width:63px;height:19px;background:#e6e6e6"></div>
<div class="a" style="left:848px;top:204px;width:1px;height:19px;background:#ababab"></div>
<div class="t" style="left:785px;top:207px;width:63px;text-align:center;font-size:13px;color:#333">H</div>
<div class="a" style="left:849px;top:204px;width:63px;height:19px;background:#e6e6e6"></div>
<div class="a" style="left:912px;top:204px;width:1px;height:19px;background:#ababab"></div>
<div class="t" style="left:849px;top:207px;width:63px;text-align:center;font-size:13px;color:#333">I</div>
<div class="a" style="left:913px;top:204px;width:63px;height:19px;background:#e6e6e6"></div>
<div class="a" style="left:976px;top:204px;width:1px;height:19px;background:#ababab"></div>
<div class="t" style="left:913px;top:207px;width:63px;text-align:center;font-size:13px;color:#333">J</div>
<div class="a" style="left:977px;top:204px;width:14px;height:19px;background:#e6e6e6"></div>
<div class="a" style="left:26px;top:204px;width:1px;height:19px;background:#ababab"></div>
<div class="a" style="left:1px;top:223px;width:991px;height:1px;background:#ababab"></div>
<svg class="a" style="left:11px;top:209px" width="13" height="12"><polygon points="12,0 12,11 0,11" fill="#b4b4b4"/></svg>
<div class="a" style="left:1px;top:224px;width:25px;height:39px;background:#d2d2d2"></div>
<div class="a" style="left:1px;top:263px;width:25px;height:1px;background:#b6b7b3"></div>
<div class="t" style="left:1px;top:248px;width:26px;text-align:center;font-size:13px;color:#262626;overflow:hidden;height:16px">1</div>
<div class="a" style="left:1px;top:264px;width:25px;height:19px;background:#d2d2d2"></div>
<div class="a" style="left:1px;top:283px;width:25px;height:1px;background:#b6b7b3"></div>
<div class="t" style="left:1px;top:268px;width:26px;text-align:center;font-size:13px;color:#262626;overflow:hidden;height:16px">2</div>
<div class="a" style="left:1px;top:284px;width:25px;height:19px;background:#d2d2d2"></div>
<div class="a" style="left:1px;top:303px;width:25px;height:1px;background:#b6b7b3"></div>
<div class="t" style="left:1px;top:288px;width:26px;text-align:center;font-size:13px;color:#262626;overflow:hidden;height:16px">3</div>
<div class="a" style="left:1px;top:304px;width:25px;height:19px;background:#d2d2d2"></div>
<div class="a" style="left:1px;top:323px;width:25px;height:1px;background:#b6b7b3"></div>
<div class="t" style="left:1px;top:308px;width:26px;text-align:center;font-size:13px;color:#262626;overflow:hidden;height:16px">4</div>
<div class="a" style="left:1px;top:324px;width:25px;height:19px;background:#d2d2d2"></div>
<div class="a" style="left:1px;top:343px;width:25px;height:1px;background:#b6b7b3"></div>
<div class="t" style="left:1px;top:328px;width:26px;text-align:center;font-size:13px;color:#262626;overflow:hidden;height:16px">5</div>
<div class="a" style="left:1px;top:344px;width:25px;height:19px;background:#d2d2d2"></div>
<div class="a" style="left:1px;top:363px;width:25px;height:1px;background:#b6b7b3"></div>
<div class="t" style="left:1px;top:348px;width:26px;text-align:center;font-size:13px;color:#262626;overflow:hidden;height:16px">6</div>
<div class="a" style="left:1px;top:364px;width:25px;height:19px;background:#d2d2d2"></div>
<div class="a" style="left:1px;top:383px;width:25px;height:1px;background:#b6b7b3"></div>
<div class="t" style="left:1px;top:368px;width:26px;text-align:center;font-size:13px;color:#262626;overflow:hidden;height:16px">7</div>
<div class="a" style="left:1px;top:384px;width:25px;height:19px;background:#d2d2d2"></div>
<div class="a" style="left:1px;top:403px;width:25px;height:1px;background:#b6b7b3"></div>
<div class="t" style="left:1px;top:388px;width:26px;text-align:center;font-size:13px;color:#262626;overflow:hidden;height:16px">8</div>
<div class="a" style="left:1px;top:404px;width:25px;height:19px;background:#d2d2d2"></div>
<div class="a" style="left:1px;top:423px;width:25px;height:1px;background:#b6b7b3"></div>
<div class="t" style="left:1px;top:408px;width:26px;text-align:center;font-size:13px;color:#262626;overflow:hidden;height:16px">9</div>
<div class="a" style="left:1px;top:424px;width:25px;height:19px;background:#d2d2d2"></div>
<div class="a" style="left:1px;top:443px;width:25px;height:1px;background:#b6b7b3"></div>
<div class="t" style="left:1px;top:428px;width:26px;text-align:center;font-size:13px;color:#262626;overflow:hidden;height:16px">10</div>
<div class="a" style="left:1px;top:444px;width:25px;height:19px;background:#d2d2d2"></div>
<div class="a" style="left:1px;top:463px;width:25px;height:1px;background:#b6b7b3"></div>
<div class="t" style="left:1px;top:448px;width:26px;text-align:center;font-size:13px;color:#262626;overflow:hidden;height:16px">11</div>
<div class="a" style="left:1px;top:464px;width:25px;height:19px;background:#d2d2d2"></div>
<div class="a" style="left:1px;top:483px;width:25px;height:1px;background:#b6b7b3"></div>
<div class="t" style="left:1px;top:468px;width:26px;text-align:center;font-size:13px;color:#262626;overflow:hidden;height:16px">12</div>
<div class="a" style="left:1px;top:484px;width:25px;height:19px;background:#d2d2d2"></div>
<div class="a" style="left:1px;top:503px;width:25px;height:1px;background:#b6b7b3"></div>
<div class="t" style="left:1px;top:488px;width:26px;text-align:center;font-size:13px;color:#262626;overflow:hidden;height:16px">13</div>
<div class="a" style="left:1px;top:504px;width:25px;height:19px;background:#d2d2d2"></div>
<div class="a" style="left:1px;top:523px;width:25px;height:1px;background:#b6b7b3"></div>
<div class="t" style="left:1px;top:508px;width:26px;text-align:center;font-size:13px;color:#262626;overflow:hidden;height:16px">14</div>
<div class="a" style="left:1px;top:524px;width:25px;height:19px;background:#d2d2d2"></div>
<div class="a" style="left:1px;top:543px;width:25px;height:1px;background:#b6b7b3"></div>
<div class="t" style="left:1px;top:528px;width:26px;text-align:center;font-size:13px;color:#262626;overflow:hidden;height:16px">15</div>
<div class="a" style="left:1px;top:544px;width:25px;height:19px;background:#d2d2d2"></div>
<div class="a" style="left:1px;top:563px;width:25px;height:1px;background:#b6b7b3"></div>
<div class="t" style="left:1px;top:548px;width:26px;text-align:center;font-size:13px;color:#262626;overflow:hidden;height:16px">16</div>
<div class="a" style="left:1px;top:564px;width:25px;height:19px;background:#e6e6e6"></div>
<div class="a" style="left:1px;top:583px;width:25px;height:1px;background:#b6b7b3"></div>
<div class="t" style="left:1px;top:568px;width:26px;text-align:center;font-size:13px;color:#262626;overflow:hidden;height:16px">17</div>
<div class="a" style="left:1px;top:584px;width:25px;height:19px;background:#e6e6e6"></div>
<div class="a" style="left:1px;top:603px;width:25px;height:1px;background:#b6b7b3"></div>
<div class="t" style="left:1px;top:588px;width:26px;text-align:center;font-size:13px;color:#262626;overflow:hidden;height:16px">18</div>
<div class="a" style="left:1px;top:604px;width:25px;height:19px;background:#e6e6e6"></div>
<div class="a" style="left:1px;top:623px;width:25px;height:1px;background:#b6b7b3"></div>
<div class="t" style="left:1px;top:608px;width:26px;text-align:center;font-size:13px;color:#262626;overflow:hidden;height:16px">19</div>
<div class="a" style="left:1px;top:624px;width:25px;height:19px;background:#e6e6e6"></div>
<div class="a" style="left:1px;top:643px;width:25px;height:1px;background:#b6b7b3"></div>
<div class="t" style="left:1px;top:628px;width:26px;text-align:center;font-size:13px;color:#262626;overflow:hidden;height:16px">20</div>
<div class="a" style="left:1px;top:644px;width:25px;height:19px;background:#e6e6e6"></div>
<div class="a" style="left:1px;top:663px;width:25px;height:1px;background:#b6b7b3"></div>
<div class="t" style="left:1px;top:648px;width:26px;text-align:center;font-size:13px;color:#262626;overflow:hidden;height:16px">21</div>
<div class="a" style="left:1px;top:664px;width:25px;height:8px;background:#e6e6e6"></div>
<div class="t" style="left:1px;top:668px;width:26px;text-align:center;font-size:13px;color:#262626;overflow:hidden;height:4px">22</div>
<div class="c" style="left:29px;top:224px">Торговая точка/</div>
<div class="c" style="left:29px;top:244px">Дата</div>
<div class="c" style="left:140px;top:224px">Продажи по Торговой</div>
<div class="c" style="left:140px;top:244px"><span style="letter-spacing:-0.22px">точке 1, тыс. руб.</span></div>
<div class="c" style="left:293px;top:224px">Продажи по Торговой</div>
<div class="c" style="left:293px;top:244px"><span style="letter-spacing:-0.22px">точке 2, тыс. руб.</span></div>
<div class="c" style="left:446px;top:224px">Продажи по Торговой</div>
<div class="c" style="left:446px;top:244px"><span style="letter-spacing:-0.22px">точке 3, тыс. руб.</span></div>
<div class="c n" style="left:27px;top:264px;width:108px;text-align:right">01.06.2019</div>
<div class="c" style="left:140px;top:264px"><span class="n">25.223</span></div>
<div class="c" style="left:293px;top:264px"><span class="n">33.224</span></div>
<div class="c" style="left:446px;top:264px"><span class="n">14.557</span></div>
<div class="c n" style="left:27px;top:284px;width:108px;text-align:right">02.06.2019</div>
<div class="c" style="left:140px;top:284px"><span class="n">25.475</span></div>
<div class="c" style="left:293px;top:284px"><span class="n">33.722</span></div>
<div class="c" style="left:446px;top:284px"><span class="n">14.673</span></div>
<div class="c n" style="left:27px;top:304px;width:108px;text-align:right">03.06.2019</div>
<div class="c" style="left:140px;top:304px"><span class="n">25.73</span></div>
<div class="c" style="left:293px;top:304px"><span class="n">34.228</span></div>
<div class="c" style="left:446px;top:304px"><span class="n">14.791</span></div>
<div class="c n" style="left:27px;top:324px;width:108px;text-align:right">04.06.2019</div>
<div class="c" style="left:140px;top:324px"><span class="n">25.987</span></div>
<div class="c" style="left:293px;top:324px"><span class="n">34.742</span></div>
<div class="c" style="left:446px;top:324px"><span class="n">14.909</span></div>
<div class="c n" style="left:27px;top:344px;width:108px;text-align:right">05.06.2019</div>
<div class="c" style="left:140px;top:344px"><span class="n">26.247</span></div>
<div class="c" style="left:293px;top:344px"><span class="n">35.263</span></div>
<div class="c" style="left:446px;top:344px"><span class="n">15.028</span></div>
<div class="c n" style="left:27px;top:364px;width:108px;text-align:right">06.06.2019</div>
<div class="c" style="left:140px;top:364px"><span class="n">26.51</span></div>
<div class="c" style="left:293px;top:364px"><span class="n">35.792</span></div>
<div class="c" style="left:446px;top:364px"><span class="n">15.149</span></div>
<div class="c n" style="left:27px;top:384px;width:108px;text-align:right">07.06.2019</div>
<div class="c" style="left:140px;top:384px"><span class="n">26.775</span></div>
<div class="c" style="left:293px;top:384px"><span class="n">36.329</span></div>
<div class="c" style="left:446px;top:384px"><span class="n">15.27</span></div>
<div class="c n" style="left:27px;top:404px;width:108px;text-align:right">08.06.2019</div>
<div class="c" style="left:140px;top:404px"><span class="n">27.042</span></div>
<div class="c" style="left:293px;top:404px"><span class="n">36.873</span></div>
<div class="c" style="left:446px;top:404px"><span class="n">15.392</span></div>
<div class="c n" style="left:27px;top:424px;width:108px;text-align:right">09.06.2019</div>
<div class="c" style="left:140px;top:424px"><span class="n">27.313</span></div>
<div class="c" style="left:293px;top:424px"><span class="n">37.427</span></div>
<div class="c" style="left:446px;top:424px"><span class="n">15.515</span></div>
<div class="c n" style="left:27px;top:444px;width:108px;text-align:right">10.06.2019</div>
<div class="c" style="left:140px;top:444px"><span class="n">27.586</span></div>
<div class="c" style="left:293px;top:444px"><span class="n">37.988</span></div>
<div class="c" style="left:446px;top:444px"><span class="n">15.639</span></div>
<div class="c n" style="left:27px;top:464px;width:108px;text-align:right">11.06.2019</div>
<div class="c" style="left:140px;top:464px"><span class="n">27.862</span></div>
<div class="c" style="left:293px;top:464px"><span class="n">38.558</span></div>
<div class="c" style="left:446px;top:464px"><span class="n">15.764</span></div>
<div class="c n" style="left:27px;top:484px;width:108px;text-align:right">12.06.2019</div>
<div class="c" style="left:140px;top:484px"><span class="n">28.141</span></div>
<div class="c" style="left:293px;top:484px"><span class="n">39.136</span></div>
<div class="c" style="left:446px;top:484px"><span class="n">15.891</span></div>
<div class="c n" style="left:27px;top:504px;width:108px;text-align:right">13.06.2019</div>
<div class="c" style="left:140px;top:504px"><span class="n">28.422</span></div>
<div class="c" style="left:293px;top:504px"><span class="n">39.723</span></div>
<div class="c" style="left:446px;top:504px"><span class="n">16.018</span></div>
<div class="c n" style="left:27px;top:524px;width:108px;text-align:right">14.06.2019</div>
<div class="c" style="left:140px;top:524px"><span class="n">28.706</span></div>
<div class="c" style="left:293px;top:524px"><span class="n">40.319</span></div>
<div class="c" style="left:446px;top:524px"><span class="n">16.146</span></div>
<div class="c n" style="left:27px;top:544px;width:108px;text-align:right">15.06.2019</div>
<div class="c" style="left:140px;top:544px"><span class="n">28.993</span></div>
<div class="c" style="left:293px;top:544px"><span class="n">40.924</span></div>
<div class="c" style="left:446px;top:544px"><span class="n">16.275</span></div>
<div class="a" style="left:25px;top:222px;width:420px;height:2px;background:#0b7140"></div>
<div class="a" style="left:25px;top:563px;width:420px;height:2px;background:#0b7140"></div>
<div class="a" style="left:25px;top:222px;width:2px;height:343px;background:#0b7140"></div>
<div class="a" style="left:443px;top:222px;width:2px;height:343px;background:#0b7140"></div>
<div class="a" style="left:27px;top:224px;width:1px;height:339px;background:#fff"></div>
<div class="a" style="left:27px;top:224px;width:416px;height:1px;background:#fff"></div>
<div class="a" style="left:442px;top:224px;width:1px;height:339px;background:#fff"></div>
<div class="a" style="left:27px;top:562px;width:416px;height:1px;background:#fff"></div>
<div class="a" style="left:440px;top:560px;width:7px;height:7px;background:#fff"></div>
<div class="a" style="left:441px;top:561px;width:5px;height:5px;background:#0b7140"></div>
<div class="a" style="left:22px;top:218px;width:428px;height:351px;border:3px solid #ff0000;border-radius:9px"></div>
<div class="a" style="left:992px;top:204px;width:21px;height:468px;background:#e6e6e6"></div>
<div class="a" style="left:995px;top:206px;width:15px;height:15px;background:#fff;border:1px solid #ababab"></div>
<svg class="a" style="left:998px;top:210px" width="9" height="6"><polygon points="0,5 4.5,0.5 9,5" fill="#606060"/></svg>
<div class="a" style="left:995px;top:222px;width:15px;height:415px;background:#fff;border:1px solid #ababab"></div>
<div class="a" style="left:996px;top:637px;width:13px;height:21px;background:#dadada"></div>
<div class="a" style="left:995px;top:658px;width:15px;height:14px;background:#fff;border:1px solid #ababab"></div>
<svg class="a" style="left:998px;top:662px" width="9" height="6"><polygon points="0,0.5 4.5,5 9,0.5" fill="#606060"/></svg>

<!-- ===== SHEET BAR ===== -->
<div class="a" style="left:1px;top:672px;width:1012px;height:28px;background:#e6e6e6"></div>
<div class="a" style="left:1px;top:672px;width:991px;height:1px;background:#ababab"></div>
<div class="a" style="left:992px;top:672px;width:21px;height:1px;background:#e6e6e6"></div>
<div class="a" style="left:1px;top:700px;width:1012px;height:1px;background:#d4d4d4"></div>
<svg class="a" style="left:28px;top:682px" width="5" height="8"><path d="M4.5 0L0 4L4.5 8Z" fill="#c6c6c6"/></svg>
<svg class="a" style="left:57px;top:682px" width="5" height="8"><path d="M0 0L4.5 4L0 8Z" fill="#c6c6c6"/></svg>
<div class="a" style="left:101px;top:672px;width:107px;height:25px;background:#fff;border-left:1px solid #ababab;border-right:1px solid #ababab"></div>
<div class="a" style="left:101px;top:695px;width:107px;height:2px;background:#217346"></div>
<div class="t" style="left:113px;top:680px;font-size:13px;font-weight:bold;color:#217346;letter-spacing:-0.05px">microexcel.ru</div>
<svg class="a" style="left:241px;top:678px" width="17" height="17"><circle cx="8.5" cy="8.5" r="7.8" fill="none" stroke="#6b6b6b" stroke-width="1.1"/><path d="M8.5 4.5V12.5M4.5 8.5H12.5" stroke="#6b6b6b" stroke-width="1.8"/></svg>
<div class="a" style="left:608px;top:681px;width:2px;height:2px;background:#a6a6a6"></div>
<div class="a" style="left:608px;top:685px;width:2px;height:2px;background:#a6a6a6"></div>
<div class="a" style="left:608px;top:689px;width:2px;height:2px;background:#a6a6a6"></div>
<div class="a" style="left:625px;top:679px;width:15px;height:15px;background:#fff;border:1px solid #a9aaa5"></div>
<div class="a" style="left:640px;top:679px;width:304px;height:15px;background:#fff;border:1px solid #a9aaa5"></div>
<div class="a" style="left:944px;top:680px;width:33px;height:13px;background:#dcdcdc"></div>
<div class="a" style="left:977px;top:679px;width:15px;height:15px;background:#fff;border:1px solid #a9aaa5"></div>
<svg class="a" style="left:630px;top:683px" width="5" height="7"><path d="M4.5 0L0 3.5L4.5 7Z" fill="#606060"/></svg>
<svg class="a" style="left:983px;top:683px" width="5" height="7"><path d="M0 0L4.5 3.5L0 7Z" fill="#606060"/></svg>

<!-- ===== STATUS BAR ===== -->
<div class="a" style="left:1px;top:701px;width:1012px;height:21px;background:#f3f3f3;border-bottom:1px solid #fbfbfb"></div>
<svg class="a" style="left:9px;top:704px" width="14" height="14"><circle cx="3" cy="3" r="2.9" fill="#6b6b6b"/><path d="M7.2 1H13V3.8H7.2Z" fill="#6b6b6b"/><path d="M12.5 3V12.5H1.5V7" fill="none" stroke="#6b6b6b" stroke-width="1.1"/><path d="M6 6.5H8M9 6.5H11M3 8.5H5M6 8.5H8M9 8.5H11M3 10.5H5M6 10.5H8M9 10.5H11" stroke="#6b6b6b" stroke-width="1"/></svg>
<div class="st" style="left:417px">Среднее: 43624</div>
<div class="st" style="left:523px">Количество: 48</div>
<div class="st" style="left:619px">Сумма: 654360</div>
<div class="a" style="left:713px;top:701px;width:38px;height:20px;background:#c8c8c8"></div>
<svg class="a" style="left:725px;top:704px" width="13" height="13"><path d="M0.5 0.5H12.5V12.5H0.5Z M4.5 0.5V12.5M8.5 0.5V12.5M0.5 4.5H12.5M0.5 8.5H12.5" fill="none" stroke="#6b6b6b"/></svg>
<svg class="a" style="left:763px;top:704px" width="14" height="13"><rect x="0.5" y="0.5" width="13" height="12" fill="none" stroke="#6b6b6b"/><rect x="3.5" y="2.5" width="7" height="8" fill="none" stroke="#6b6b6b"/><path d="M5 4.5H9M5 6.5H9M5 8.5H9" stroke="#6b6b6b"/></svg>
<svg class="a" style="left:801px;top:704px" width="14" height="13"><path d="M0.5 0.5H13.5V12.5H0.5Z M0.5 7.5H8.5V0.5M4.5 0.5V7.5" fill="none" stroke="#6b6b6b"/></svg>
<div class="a" style="left:832px;top:710px;width:7px;height:2px;background:#6b6b6b"></div>
<div class="a" style="left:842px;top:711px;width:100px;height:1px;background:#a6a6a6"></div>
<div class="a" style="left:890px;top:705px;width:5px;height:11px;background:#6b6b6b"></div>
<div class="a" style="left:945px;top:710px;width:8px;height:2px;background:#6b6b6b"></div>
<div class="a" style="left:948px;top:707px;width:2px;height:8px;background:#6b6b6b"></div>
<div class="t" style="left:964px;top:705px;font-size:11px;color:#333">100 %</div>
</body></html>
